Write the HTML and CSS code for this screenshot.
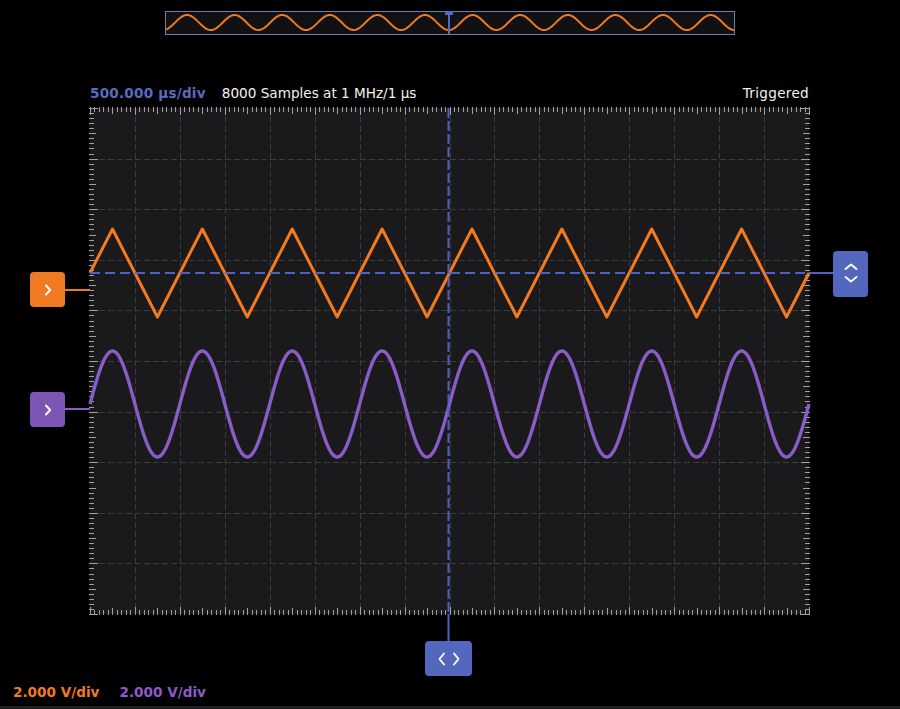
FILE: index.html
```html
<!DOCTYPE html>
<html>
<head>
<meta charset="utf-8">
<link rel="stylesheet" href="styles.css">
</head>
<body>
<div class="app">
  <div class="overview-row">
    <svg class="overview" width="570" height="24" viewBox="165 11 570 24">
      <rect x="165.5" y="11.5" width="569" height="23" fill="#111113" stroke="#6a80a6" stroke-width="1"/>
      <path id="ovwave" fill="none" stroke="#f07a22" stroke-width="2"/>
      <rect x="445" y="11" width="8" height="4" fill="#5468c4"/>
      <rect x="448" y="11" width="2" height="23" fill="#5468c4"/>
    </svg>
  </div>
  <div class="header">
    <div class="header-left">
      <span class="timebase">500.000 μs/div</span>
      <span class="samples">8000 Samples at 1 MHz/1 μs</span>
    </div>
    <span class="status">Triggered</span>
  </div>
  <div class="stage">
    <svg class="scope" width="900" height="583" viewBox="0 101 900 583">
      <rect x="90" y="108" width="719" height="506" fill="#1a1a1c"/>
      <path id="grid" fill="none" stroke="#3c3c40" stroke-width="1" stroke-dasharray="6 3"/>
      <path id="ticks" fill="none" stroke="#a0a0a2" stroke-width="1"/>
      <line x1="65" y1="290" x2="90" y2="290" stroke="#f07a22" stroke-width="2"/>
      <line x1="65" y1="409" x2="90" y2="409" stroke="#8a5cc4" stroke-width="2"/>
      <path id="sine" fill="none" stroke="#8a5cc8" stroke-width="3.4" stroke-linejoin="round"/>
      <path id="tri" fill="none" stroke="#f47a20" stroke-width="3" stroke-linejoin="round"/>
      <line x1="90" y1="273" x2="809" y2="273" stroke="#4f62c2" stroke-width="2" stroke-dasharray="10 5"/>
      <line x1="809" y1="273" x2="834" y2="273" stroke="#4f62c2" stroke-width="2"/>
      <line x1="448.5" y1="108" x2="448.5" y2="614" stroke="#4f62c2" stroke-width="2" stroke-dasharray="10 3"/>
      <line x1="448.5" y1="614" x2="448.5" y2="642" stroke="#4f62c2" stroke-width="2"/>
    </svg>
    <div class="marker ch1">
      <svg width="10" height="12" viewBox="0 0 10 12"><path d="M3 1.5l4.2 4.5-4.2 4.5" fill="none" stroke="#fff" stroke-width="1.9" stroke-linecap="round" stroke-linejoin="round"/></svg>
    </div>
    <div class="marker ch2">
      <svg width="10" height="12" viewBox="0 0 10 12"><path d="M3 1.5l4.2 4.5-4.2 4.5" fill="none" stroke="#fff" stroke-width="1.9" stroke-linecap="round" stroke-linejoin="round"/></svg>
    </div>
    <div class="marker trig">
      <svg width="16" height="24" viewBox="0 0 16 24"><path d="M2.5 7l5.5-4.5 5.5 4.5M2.5 15l5.5 4.5 5.5-4.5" fill="none" stroke="#fff" stroke-width="1.9" stroke-linecap="round" stroke-linejoin="round"/></svg>
    </div>
    <div class="marker hpos">
      <svg width="24" height="16" viewBox="0 0 24 16"><path d="M7 2.5l-4.5 5.5 4.5 5.5M17 2.5l4.5 5.5-4.5 5.5" fill="none" stroke="#fff" stroke-width="1.9" stroke-linecap="round" stroke-linejoin="round"/></svg>
    </div>
  </div>
  <div class="footer">
    <span class="vdiv ch1-text">2.000 V/div</span>
    <span class="vdiv ch2-text">2.000 V/div</span>
  </div>
  <div class="strip"></div>
</div>
<script src="script.js"></script>
</body>
</html>
```

FILE: styles.css
```css
html, body {
  margin: 0;
  padding: 0;
  background: #000;
}
body {
  width: 900px;
  height: 709px;
  overflow: hidden;
  font-family: "DejaVu Sans", "Liberation Sans", sans-serif;
  font-size: 13.6px;
  line-height: 16px;
}
.app {
  display: flex;
  flex-direction: column;
  width: 900px;
  height: 709px;
}
.overview-row {
  height: 84px;
  box-sizing: border-box;
  padding: 11px 0 0 165px;
}
.overview {
  display: block;
}
.header {
  height: 17px;
  width: 719px;
  margin-left: 90px;
  display: flex;
  justify-content: space-between;
  align-items: center;
}
.header-left {
  display: flex;
  gap: 16px;
}
.timebase {
  color: #5a6bc2;
  font-weight: bold;
  letter-spacing: 0.2px;
}
.samples, .status {
  color: #f2f2f2;
}
.status {
  letter-spacing: 0.3px;
}
.stage {
  position: relative;
  height: 583px;
}
.scope {
  display: block;
}
.marker {
  position: absolute;
  display: flex;
  align-items: center;
  justify-content: center;
  border-radius: 4px;
}
.marker svg {
  display: block;
}
.ch1 {
  left: 30px;
  top: 171px;
  width: 35px;
  height: 35px;
  background: #f07a22;
}
.ch2 {
  left: 30px;
  top: 291px;
  width: 35px;
  height: 35px;
  background: #7d55b4;
}
.trig {
  left: 833px;
  top: 150px;
  width: 35px;
  height: 46px;
  background: #5367bf;
}
.hpos {
  left: 425px;
  top: 540px;
  width: 47px;
  height: 35px;
  background: #5367bf;
}
.footer {
  height: 22px;
  padding-left: 13px;
  display: flex;
  gap: 20px;
}
.vdiv {
  font-weight: bold;
}
.ch1-text {
  color: #f07a22;
}
.ch2-text {
  color: #8a5cc8;
}
.strip {
  height: 3px;
  background: #202022;
}
```

FILE: script.js
```js
(function () {
  var L = 90, R = 809, T = 108, B = 614;
  var dx = (R - L) / 16, dy = (B - T) / 10;
  function f(n) { return n.toFixed(2); }
  function px(n) { return (Math.round(n) + 0.5).toFixed(1); }

  var g = '';
  for (var i = 1; i < 16; i++) { var x = L + dx * i; g += 'M' + px(x) + ' ' + T + 'V' + B; }
  for (var j = 1; j < 10; j++) { var y = T + dy * j; g += 'M' + L + ' ' + px(y) + 'H' + R; }
  document.getElementById('grid').setAttribute('d', g);

  var t = '';
  for (var a = 0; a <= 160; a++) {
    var tx = L + dx * a / 10;
    var len = a % 10 === 0 ? 8 : (a % 5 === 0 ? 7 : 5);
    t += 'M' + px(tx) + ' ' + (T - 1) + 'v' + len + 'M' + px(tx) + ' ' + (B + 1) + 'v' + (-len);
  }
  for (var b = 0; b <= 100; b++) {
    var ty = T + dy * b / 10;
    var ln = b % 10 === 0 ? 9 : (b % 5 === 0 ? 7 : 5);
    t += 'M' + (L - 1) + ' ' + px(ty) + 'h' + ln + 'M' + (R + 1) + ' ' + px(ty) + 'h' + (-ln);
  }
  document.getElementById('ticks').setAttribute('d', t);

  var P = dx * 2;
  var tri = 'M' + L + ' 273';
  for (var n = 0; n < 9; n++) {
    var pk = L + P / 4 + n * P, tr = L + 3 * P / 4 + n * P;
    if (pk < R) tri += 'L' + f(pk) + ' 229';
    if (tr < R) tri += 'L' + f(tr) + ' 317';
  }
  tri += 'L' + R + ' 273';
  document.getElementById('tri').setAttribute('d', tri);

  var s = '';
  for (var sx = L; sx <= R; sx += 1) {
    var u = (sx - L) / P;
    var sy = 404 - 53 * Math.sin(2 * Math.PI * u);
    s += (sx === L ? 'M' : 'L') + sx + ' ' + f(sy);
  }
  document.getElementById('sine').setAttribute('d', s);

  var o = '';
  for (var ox = 166; ox <= 734; ox += 1) {
    var oy = 22.5 - 7.5 * Math.cos(2 * Math.PI * (ox - 187) / 47.6);
    o += (ox === 166 ? 'M' : 'L') + ox + ' ' + f(oy);
  }
  document.getElementById('ovwave').setAttribute('d', o);
})();
```
